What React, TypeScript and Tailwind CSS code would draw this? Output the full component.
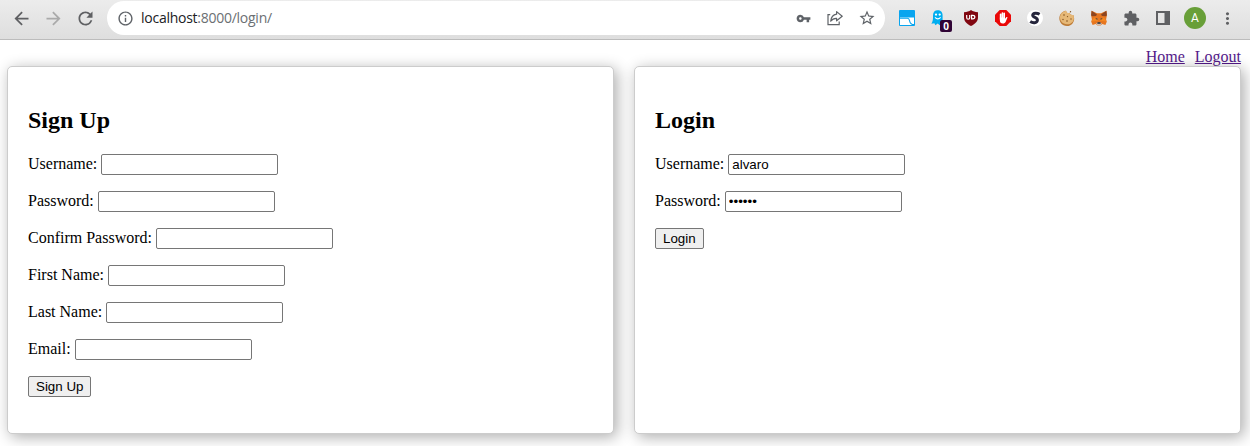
import React from 'react';
import {
  MdArrowBack,
  MdArrowForward,
  MdRefresh,
  MdInfoOutline,
  MdVpnKey,
  MdStarBorder,
  MdExtension,
  MdMoreVert,
} from 'react-icons/md';

function Cell({ children }: { children: React.ReactNode }) {
  return <div className="flex h-[34px] w-8 shrink-0 items-center justify-center">{children}</div>;
}

function ShareIcon() {
  return (
    <svg width="16" height="16" viewBox="0 0 16 16" fill="none" stroke="#5f6368" strokeWidth="1.2">
      <path d="M3.2 4.600H1V14.600h11.200v-3" />
      <path d="M9.600 1.600 15.200 6.300 9.600 10.800V8.300C7 8.200 5.200 9.100 3.700 11.200 4.100 7.500 6.200 4.700 9.600 4.200Z" strokeLinejoin="round" />
    </svg>
  );
}

function WindowIcon() {
  return (
    <svg width="16" height="16" viewBox="0 0 16 16">
      <rect width="16" height="16" rx="1" fill="#09a5ef" />
      <path d="M1 7.500H15V15H1Z" fill="#fff" />
      <path d="M1 8.300H8.500C10.300 8.300 10.300 9.500 10.700 11.300 11.200 13.500 12.500 14.500 15 14.600" fill="none" stroke="#09a5ef" strokeWidth="1.100" />
    </svg>
  );
}

function GhostIcon() {
  return (
    <div className="relative h-4 w-4">
      <svg className="absolute top-0 left-0" width="14" height="16" viewBox="0 0 14 16">
        <path d="M2 5.2C2 2.3 3.8.3 6.7.3s4.900 2 4.900 4.900v5l.9 3.600-2.200-.5-1.600 2-2-1.800-2.300 1.800-1-2-3 .5C1.600 11.500 2 9.800 2 8Z" fill="#00aef0" />
        <circle cx="5" cy="4.600" r="1.150" fill="#fff" />
        <circle cx="8.700" cy="4.600" r="1.150" fill="#fff" />
        <path d="M4 7.300q2.800 3.200 5.600 0" fill="none" stroke="#fff" strokeWidth="1.100" />
      </svg>
      <span className="absolute top-[10px] left-[9px] flex h-3 w-3 items-center justify-center rounded-[2px] bg-[#300436] font-['Open_Sans',sans-serif] text-[10px] leading-none font-bold text-white">
        0
      </span>
    </div>
  );
}

function ShieldIcon() {
  return (
    <svg width="16" height="16" viewBox="0 0 16 16">
      <path d="M8 0c2 1.400 4 2 7 2.200v5c0 4-2.500 6.600-7 8.800C3.500 13.800 1 11.200 1 7.200v-5C4 2 6 1.400 8 0Z" fill="#800610" />
      <path d="M3.700 5v2.700c0 2 3 2 3 0V5" fill="none" stroke="#fff" strokeWidth="1.200" />
      <path d="M8.600 5.300v3.600h1.200c2.700 0 2.700-3.600 0-3.600Z" fill="none" stroke="#fff" strokeWidth="1.200" />
    </svg>
  );
}

function HandIcon() {
  return (
    <svg width="16" height="16" viewBox="0 0 16 16">
      <path d="M4.700 0h6.600L16 4.700v6.600L11.300 16H4.700L0 11.300V4.700Z" fill="#ea0808" />
      <path d="M5.600 4.200v5M7.400 3v6M9.200 3.300v6" stroke="#fff" strokeWidth="1.600" strokeLinecap="round" />
      <path d="M4.900 7.500h5.200v1.300l1.200-1.600c.4-.6 1.400-.2 1.100.5L10.800 11.500c-.6 1.400-1.600 2-3 2-2 0-2.900-1.200-2.900-3Z" fill="#fff" />
    </svg>
  );
}

function SIcon() {
  return (
    <span className="flex h-4 w-4 items-center justify-center rounded-full bg-white">
      <svg width="12" height="14" viewBox="0 0 12 14">
        <path d="M10.600 3.200C8.300 1.800 4 1.500 3.700 4.200 3.500 6.900 8.900 6.100 8.400 9.400 7.900 12.300 3.800 12.200 1.200 10.500" fill="none" stroke="#25253b" strokeWidth="3" />
      </svg>
    </span>
  );
}

function CookieIcon() {
  return (
    <svg width="16" height="16" viewBox="0 0 16 16">
      <path d="M7 .7c.7 2.300 1.700 2.600 3.500 2.100.6 1.900 1.700 2.500 3.800 2.100C16.800 10.500 13.500 16 8 16-2 15.700-2 1.800 7 .7Z" fill="#bd7b36" />
      <path d="M7 .7c.7 2.300 1.700 2.600 3.500 2.100.6 1.900 1.700 2.500 3.800 2.100 2 5-1.200 9.400-6.300 9.400C-.9 14.200-1.400 2.200 7 .7Z" fill="#e6b877" />
      <g fill="#80501e">
        <circle cx="5" cy="5" r=".8" />
        <circle cx="8.500" cy="6.600" r=".7" />
        <circle cx="4" cy="9.500" r=".7" />
        <circle cx="8" cy="11" r=".8" />
        <circle cx="12" cy="9" r=".7" />
        <circle cx="11.500" cy="1.700" r=".7" />
      </g>
    </svg>
  );
}

function FoxIcon() {
  return (
    <svg width="16" height="16" viewBox="0 0 16 16">
      <path d="M.6.800 6 3.200h4L15.400.8l.5 4.500-.8 4.200.7 2.200-1.400 3.300-3.100-.9L9.500 15.500h-3l-1.800-1.400L1.600 15 .2 11.700l.7-2.200L.1 5.300Z" fill="#e67620" />
      <path d="M.6.8 6 4.400 5 6 .9 6.300.1 5.300ZM15.400.8 10 4.400 11 6l4.100.3.8-1Z" fill="#8c4520" />
      <path d="m3 7.500 3.500.7.4 2.500L.4 11.500ZM13 7.500l-3.500.7-.4 2.500 6.500.8Z" fill="#f58720" />
      <path d="m4.200 8.700 2-.4.4 1.500ZM11.800 8.700l-2-.4-.4 1.500Z" fill="#293342" />
      <path d="m5 13.600 1.600-1h2.800l1.600 1-1.500 1.900h-3Z" fill="#d3bfb2" />
      <path d="M6.500 12.300h3l.2 1.500H6.300Z" fill="#242b35" />
    </svg>
  );
}

function SidePanelIcon() {
  return (
    <svg width="14" height="14" viewBox="0 0 14 14">
      <path d="M0 0h14v14H0ZM2 2v10h6.500V2Z" fill="#5f6063" fillRule="evenodd" />
    </svg>
  );
}

function BrowserBar() {
  return (
    <header className="flex h-10 items-start border-b border-[#bcbcbc] bg-linear-to-b from-[#ececec] to-[#dedede] pt-px pl-[5px] text-[#5f6063]">
      <Cell><MdArrowBack size={21} /></Cell>
      <Cell><MdArrowForward size={21} className="text-[#aaaaaa]" /></Cell>
      <Cell><MdRefresh size={21} /></Cell>
      <div className="ml-[6px] flex h-[34px] w-[778px] items-center rounded-full bg-white pr-[2px] pl-[10px] text-[#5f6368]">
        <MdInfoOutline size={17} />
        <div className="ml-[7px] flex-1 pb-[2px] font-['Open_Sans',sans-serif] text-[14px] tracking-[-0.26px] text-[#6b6f73]">
          <span className="text-[#202124]">localhost</span>:8000/login/
        </div>
        <Cell><MdVpnKey size={15} /></Cell>
        <Cell><ShareIcon /></Cell>
        <Cell><MdStarBorder size={18} /></Cell>
      </div>
      <div className="ml-[6px] flex">
        <Cell><WindowIcon /></Cell>
        <Cell><GhostIcon /></Cell>
        <Cell><ShieldIcon /></Cell>
        <Cell><HandIcon /></Cell>
        <Cell><SIcon /></Cell>
        <Cell><CookieIcon /></Cell>
        <Cell><FoxIcon /></Cell>
        <Cell><MdExtension size={17} /></Cell>
        <Cell><SidePanelIcon /></Cell>
        <Cell>
          <span className="flex h-[22px] w-[22px] items-center justify-center rounded-full bg-[#689f38] font-[Roboto,sans-serif] text-[12px] leading-none text-white">A</span>
        </Cell>
        <Cell><MdMoreVert size={19} /></Cell>
      </div>
    </header>
  );
}

function Field({ label, type = 'text', value }: { label: string; type?: string; value?: string }) {
  return (
    <label className="mb-4 flex h-[21px] items-baseline gap-1 leading-[18px]">
      {label}:
      <input
        type={type}
        defaultValue={value}
        className="h-[21px] w-[177px] rounded-[2px] border border-[#767676] bg-white px-[3px] font-['Liberation_Sans',sans-serif] text-[13.333px] leading-[15px] outline-none"
      />
    </label>
  );
}

function Panel({ title, action, children }: { title: string; action: string; children: React.ReactNode }) {
  return (
    <form
      className="h-[368px] w-[607px] rounded-[5px] border border-[#cccccc] bg-white px-5 pt-10 shadow-[3px_3px_15px_rgba(0,0,0,0.33)]"
      onSubmit={(e) => e.preventDefault()}
    >
      <h2 className="mb-5 h-[27px] text-[24px] leading-[27px] font-bold">{title}</h2>
      {children}
      <button
        type="submit"
        className="block h-[21px] rounded-[2px] border border-[#767676] bg-[#efefef] px-[7px] font-['Liberation_Sans',sans-serif] text-[13.333px] leading-[19px]"
      >
        {action}
      </button>
    </form>
  );
}

export default function App() {
  return (
    <div className="h-[446px] w-[1250px] overflow-hidden bg-white font-['Liberation_Serif',serif] text-[16px] text-black">
      <BrowserBar />
      <nav className="flex h-[26px] justify-end gap-[10px] pt-2 pr-[9px] leading-[18px] text-[#551a8b]">
        <a href="#home" className="underline">Home</a>
        <a href="#logout" className="underline">Logout</a>
      </nav>
      <main className="flex gap-5 pl-[7px]">
        <Panel title="Sign Up" action="Sign Up">
          <Field label="Username" />
          <Field label="Password" type="password" />
          <Field label="Confirm Password" type="password" />
          <Field label="First Name" />
          <Field label="Last Name" />
          <Field label="Email" type="email" />
        </Panel>
        <Panel title="Login" action="Login">
          <Field label="Username" value="alvaro" />
          <Field label="Password" type="password" value="secret" />
        </Panel>
      </main>
    </div>
  );
}
